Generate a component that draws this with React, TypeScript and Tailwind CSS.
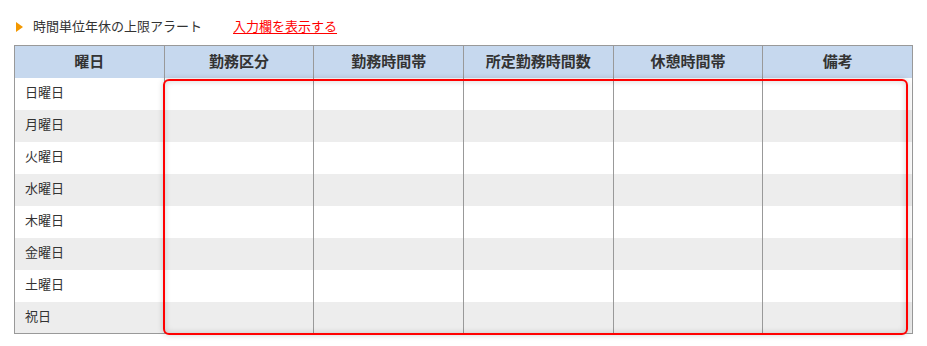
const columns = ["曜日", "勤務区分", "勤務時間帯", "所定勤務時間数", "休憩時間帯", "備考"];
const days = ["日曜日", "月曜日", "火曜日", "水曜日", "木曜日", "金曜日", "土曜日", "祝日"];

const App = () => {
  return (
    <div className="bg-white w-[927px] h-[346px] pl-[14px] pt-[17px] text-[#333] font-['Noto_Sans_CJK_JP',sans-serif]">
      <div className="flex items-center h-[17px] text-[13px] leading-none">
        <svg width="7" height="10" viewBox="0 0 7 10" className="ml-[2px] mt-[2px]">
          <polygon points="0,0 7,5 0,10" fill="#f39800" />
        </svg>
        <span className="ml-[10px]">時間単位年休の上限アラート</span>
        <a href="#" className="ml-[31px] text-[#ff0000] underline underline-offset-2">
          入力欄を表示する
        </a>
      </div>

      <div className="relative mt-[11px] w-[899px]">
        <table className="w-[899px] table-fixed border-collapse border border-[#999]">
          <thead>
            <tr className="h-[32px] bg-[#c6d8ee]">
              {columns.map((c) => (
                <th key={c} className="border-x border-[#999] pb-[2px] text-[15px] font-bold text-center text-[#333]">
                  {c}
                </th>
              ))}
            </tr>
          </thead>
          <tbody>
            {days.map((d, i) => (
              <tr key={d} className={`h-[32px] ${i % 2 === 1 ? "bg-[#ededed]" : "bg-white"}`}>
                <td className="border-x border-[#999] pl-[10px] pb-[3px] text-[13px]">{d}</td>
                {columns.slice(1).map((c) => (
                  <td key={c} className="border-x border-[#999]"></td>
                ))}
              </tr>
            ))}
          </tbody>
        </table>
        <div className="absolute left-[149px] top-[34px] w-[745px] h-[256px] rounded-[6px] border-2 border-[#ff0000] shadow-[inset_0_0_6px_rgba(0,0,0,0.18),0_0_6px_rgba(0,0,0,0.18)]" />
      </div>
    </div>
  );
};

export default App;
